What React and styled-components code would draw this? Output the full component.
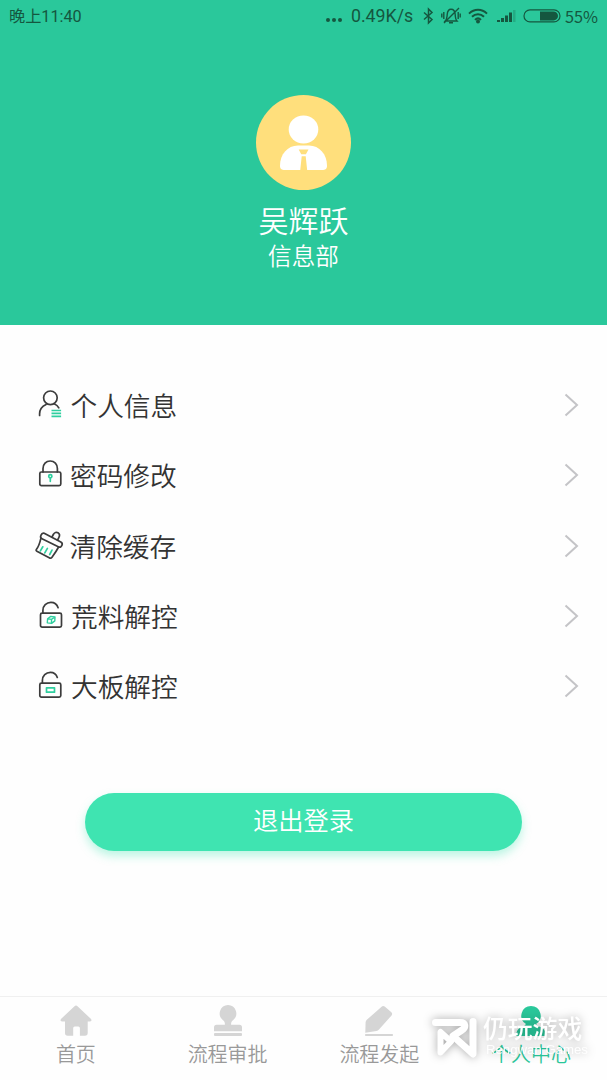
import React from "react";
import styled, { createGlobalStyle } from "styled-components";

const GlobalStyle = createGlobalStyle`
  * { box-sizing: border-box; }
  body { margin: 0; background: #fefefe; font-family: "Noto Sans CJK SC", "Noto Sans", sans-serif; }
`;

const Screen = styled.div`
  display: flex;
  flex-direction: column;
  width: 607px;
  height: 1080px;
  overflow: hidden;
  background: #fefefe;
`;

const Header = styled.header`
  height: 325.4px;
  background: #2ac89b;
  color: #fff;
  display: flex;
  flex-direction: column;
  align-items: center;
`;

const StatusBar = styled.div`
  width: 100%;
  height: 32px;
  padding: 0 9px;
  display: flex;
  align-items: center;
  color: #15573f;
  font-size: 16px;
  line-height: 32px;
  white-space: nowrap;
`;

const Clock = styled.span`
  flex: 1;
  padding-top: 2px;
  font-family: Roboto, "Noto Sans CJK SC", sans-serif;
  font-size: 16.2px;
`;

const Rate = styled.span`
  width: 63px;
  margin: 0 8px 0 8px;
  font-family: Roboto, sans-serif;
  font-size: 17.8px;
`;

const Percent = styled.span`
  margin-left: 4px;
  font-size: 16.3px;
`;

const StatusIcon = styled.svg`
  display: block;
  flex: none;
  margin-right: ${(p) => p.$gap || 0}px;
`;

const Avatar = styled.div`
  width: 95px;
  height: 95px;
  margin-top: 63px;
  border-radius: 50%;
  background: #ffdf7c;
`;

const Name = styled.div`
  margin-top: 9px;
  font-size: 30px;
  line-height: 40px;
  font-weight: 350;
`;

const Department = styled.div`
  font-size: 23.6px;
  line-height: 32px;
  font-weight: 350;
`;

const Menu = styled.main`
  padding: 44.6px 28px 0 35px;
  flex: 1;
`;

const MenuRow = styled.div`
  height: 70.3px;
  display: flex;
  align-items: center;
  color: #333;
`;

const RowIcon = styled.svg`
  display: block;
  flex: none;
  overflow: visible;
  fill: none;
  stroke: #3c3c3c;
  stroke-width: 1.7;
  stroke-linecap: round;
  stroke-linejoin: round;

  .accent { stroke: #2fcf9f; }
`;

const RowLabel = styled.span`
  flex: 1;
  margin-left: ${(p) => p.$gap}px;
  font-size: 26.7px;
  line-height: 40px;
  font-weight: 350;
`;

const Chevron = styled.svg`
  display: block;
  fill: none;
  stroke: #c4c4c7;
  stroke-width: 2;
`;

const LogoutButton = styled.button`
  display: block;
  width: 437px;
  height: 58px;
  margin: 71.5px 0 0 50px;
  padding: 0 0 5px;
  border: 0;
  border-radius: 29px;
  background: #3fe4b1;
  box-shadow: 0 5px 10px rgba(63, 228, 177, 0.35);
  color: #fff;
  font-family: inherit;
  font-size: 25.3px;
  font-weight: 350;
  line-height: 53px;
`;

const TabBar = styled.nav`
  position: relative;
  display: flex;
  height: 84px;
  border-top: 1px solid #f0f0f0;
`;

const Tab = styled.div`
  flex: 1;
  display: flex;
  flex-direction: column;
  align-items: center;
  padding-top: 7px;
  color: ${(p) => (p.$active ? "#2ac89b" : "#999")};
  font-size: 20px;
  line-height: 30px;
  font-weight: 350;
`;

const TabIcon = styled.svg`
  display: block;
  fill: ${(p) => (p.$active ? "#2ac89b" : "#d5d5d5")};
`;

const TabLabel = styled.span`
  margin-top: 2px;
`;

const Watermark = styled.div`
  position: absolute;
  left: 431px;
  top: 17px;
  display: flex;
  color: #fff;
  filter: drop-shadow(0 0 5px rgba(0, 0, 0, 0.34));
`;

const WatermarkText = styled.div`
  margin: -2px 0 0 4px;
  white-space: nowrap;
`;

const WatermarkTitle = styled.div`
  font-size: 24.8px;
  line-height: 30px;
  font-weight: 500;
`;

const WatermarkSub = styled.div`
  margin: 0 0 0 3px;
  font-family: "Liberation Sans", sans-serif;
  font-size: 13.2px;
  line-height: 16px;
  color: rgba(255, 255, 255, 0.92);
`;

const rows = [
  {
    label: "个人信息",
    gap: 5.5,
    icon: (
      <>
        <circle cx="15.4" cy="7.8" r="6.8" />
        <path d="M4.6 25.5v-1.8c0-4.2 2.4-7.4 6.5-9.3M19.5 14c2 .8 3.3 2 4.3 3.8" />
        <path className="accent" d="M16.5 20.5h9.6M16.5 23.4h9.6M16.5 26.3h9.6" strokeLinecap="butt" />
      </>
    ),
  },
  {
    label: "密码修改",
    gap: 5,
    icon: (
      <>
        <rect x="4.8" y="12" width="21" height="13.7" rx="1.6" />
        <path d="M8 12V8.6c0-4.4 3-7.6 7.2-7.6s7.2 3.2 7.2 7.6V12" />
        <path className="accent" d="M15.3 18v3.3" />
        <circle className="accent" cx="15.3" cy="16.3" r="1.6" />
      </>
    ),
  },
  {
    label: "清除缓存",
    gap: 4.5,
    icon: (
      <>
        <path d="M9.2 2.2 25.8 11c1.6.9 1.8 1.8 1.2 3.2-.7 1.7-1.8 2.4-3.2 1.7L7 7.8C5.4 7 5.2 6 5.9 4.4c.7-1.8 1.7-2.8 3.3-2.2Z" />
        <path d="m17 6 1.3-2.5C19.5 1.3 21.4.8 23 1.8s2 2.7.8 4.9L22.6 9" />
        <path d="M5.8 7.6C4.8 12 3.5 15.7 1.5 18.2c-.7.9-.5 1.5.4 2l12.3 6.5c1.2.7 2 .6 2.8-.5 2.5-3.4 4.6-6.3 6.6-10.2" />
        <path className="accent" d="m7.8 15.8-2.4 4.1M12.4 17.4l-2.6 4.5M17 19.1l-2.3 4.4" />
      </>
    ),
  },
  {
    label: "荒料解控",
    gap: 6,
    icon: (
      <>
        <rect x="5.5" y="12.2" width="21" height="14" rx="1.6" />
        <path d="M7.9 12V9.4c0-4.6 3.5-8 8-8 3.5 0 6 1.7 7.2 5.3" />
        <path className="accent" strokeWidth="1.4" d="m12.6 17.8 3.2-2.4 4.2.5-.2 4-3.2 2.5-4.3-.5ZM12.6 17.8l3.9.6 3.4-2.4M16.5 18.4v3.8" />
      </>
    ),
  },
  {
    label: "大板解控",
    gap: 6,
    icon: (
      <>
        <rect x="4.8" y="12.2" width="21" height="14" rx="1.6" />
        <path d="M7.4 12V9.4c0-4.6 3.5-8 8-8 3.3 0 5.8 1.6 6.9 5.1" />
        <rect className="accent" x="11.5" y="16.8" width="8" height="4.4" />
      </>
    ),
  },
];

const tabs = [
  {
    label: "首页",
    icon: <path d="M14.5 2.2c1-.9 2-.9 3 0l13.3 12.6c1.2 1.3.7 2.6-.8 2.6h-2.3V29q0 2.8-2.8 2.8h-5V24q0-1.6-1.6-1.6h-3.6q-1.5 0-1.5 1.6v7.8H7.7Q5 31.800 5 29V17.400H2c-1.500 0-2-1.300-.8-2.600Z" />,
  },
  {
    label: "流程审批",
    icon: (
      <>
        <path d="M16 1a8.5 8.5 0 0 1 5 15.2c-1.5 1.2-1.9 2-1.9 3.9v.6h8.3q2.6 0 2.6 2.7v3.9H2v-3.9q0-2.7 2.6-2.7h8.3v-.6c0-1.9-.4-2.7-1.9-3.9A8.5 8.5 0 0 1 16 1Z" />
        <rect x="2" y="29" width="28" height="3" rx="1" />
      </>
    ),
  },
  {
    label: "流程发起",
    icon: (
      <>
        <path d="M18.6 2.8q1.4-1.5 3.1-.2l6.4 5.3q1.8 1.6.5 3.500L16 25.600q-1 1.200-2.600 1.400L2.300 28.700l.3-10.400q.1-1.500 1.200-2.500Z" />
        <rect x="2" y="30" width="28" height="2" rx=".8" />
      </>
    ),
  },
  {
    label: "个人中心",
    active: true,
    icon: <path d="M16 2a9.7 9.7 0 0 1 5.3 17.8c0 1.6 1.3 2.2 3.5 3C29 24.4 30.6 27 31 32H1c.4-5 2-7.6 6.2-9.2 2.2-.8 3.5-1.4 3.5-3A9.7 9.7 0 0 1 16 2Z" />,
  },
];

export default function App() {
  return (
    <Screen>
      <GlobalStyle />
      <Header>
        <StatusBar>
          <Clock>晚上11:40</Clock>
          <StatusIcon width="18" height="16" fill="#15573f">
            <circle cx="3" cy="12" r="2" />
            <circle cx="9" cy="12" r="2" />
            <circle cx="15" cy="12" r="2" />
          </StatusIcon>
          <Rate>0.49K/s</Rate>
          <StatusIcon $gap={6} width="13" height="18" fill="none" stroke="#15573f" strokeWidth="1.5">
            <path d="m2 5.500 8 7L6.500 16V2l3.500 3.500-8 7" />
          </StatusIcon>
          <StatusIcon $gap={7} width="20" height="20" fill="none" stroke="#15573f" strokeWidth="1.4">
            <path d="M4.2 15c2-2 1.7-3.5 2-6.5C6.5 5 7.4 3.3 10 3.3S14 5 14.2 8.5c.3 3-.1 4.5 1.8 6.5ZM8 16.7h4M18 2 3 17M2.8 6v7M.8 7.5v4M17.2 6v7M19.2 7.5v4" />
          </StatusIcon>
          <StatusIcon $gap={9} width="20" height="16" fill="none" stroke="#15573f" strokeWidth="2">
            <path d="M1 5.6c5.3-5.1 12.7-5.1 18 0M4 8.8c3.5-3.4 8.5-3.4 12 0M7 11.9c1.8-1.8 4.2-1.8 6 0" />
            <circle cx="10" cy="13.5" r="1" />
          </StatusIcon>
          <StatusIcon $gap={7} width="19" height="14" fill="#15573f">
            <path d="M0 11h3v2H0ZM4 9h3v4H4ZM8 6.5h3V13H8ZM12 3.5h3V13H12Z" />
            <path opacity=".25" d="M16 1h2.5v12H16Z" />
          </StatusIcon>
          <StatusIcon width="38" height="14">
            <rect x="1" y=".9" width="36" height="12" rx="6" fill="none" stroke="#15573f" strokeWidth="1.2" />
            <path d="M17 2.4h13.5a4.5 4.5 0 0 1 0 9H17Z" fill="#15573f" />
          </StatusIcon>
          <Percent>55%</Percent>
        </StatusBar>
        <Avatar>
          <svg width="95" height="95" fill="#fff">
            <ellipse cx="47.5" cy="34.5" rx="14.8" ry="14" />
            <path d="M42 50.5h11c10.5 0 18 9 18 20 0 3.5-1.5 4.5-5 4.5H29c-3.5 0-5-1-5-4.5C24 59.500 31.500 50.500 42 50.500Z" />
            <path d="M42.7 54.4h9.8l-2.6 4.8h-4.7ZM45.7 61.2h4L51.2 75.5H44.2Z" fill="#ffdf7c" />
          </svg>
        </Avatar>
        <Name>吴辉跃</Name>
        <Department>信息部</Department>
      </Header>
      <Menu>
        {rows.map((row) => (
          <MenuRow key={row.label}>
            <RowIcon width="30" height="30">{row.icon}</RowIcon>
            <RowLabel $gap={row.gap}>{row.label}</RowLabel>
            <Chevron width="15" height="24">
              <path d="m1.5 1.5 11.5 10.5L1.5 22.5" />
            </Chevron>
          </MenuRow>
        ))}
        <LogoutButton>退出登录</LogoutButton>
      </Menu>
      <TabBar>
        {tabs.map((tab) => (
          <Tab key={tab.label} $active={tab.active}>
            <TabIcon $active={tab.active} width="32" height="33">{tab.icon}</TabIcon>
            <TabLabel>{tab.label}</TabLabel>
          </Tab>
        ))}
        <Watermark>
          <svg width="48" height="46" fill="none" stroke="currentColor" strokeWidth="7" strokeLinejoin="round" strokeLinecap="round">
            <path d="M4.500 8.500H29c6 0 6 5 2 7.500l-9 6L42 40V7.500" />
            <path d="M9.500 18v20.500L20 27.500Z" strokeWidth="6" />
          </svg>
          <WatermarkText>
            <WatermarkTitle>仍玩游戏</WatermarkTitle>
            <WatermarkSub>Rengwan Games</WatermarkSub>
          </WatermarkText>
        </Watermark>
      </TabBar>
    </Screen>
  );
}
